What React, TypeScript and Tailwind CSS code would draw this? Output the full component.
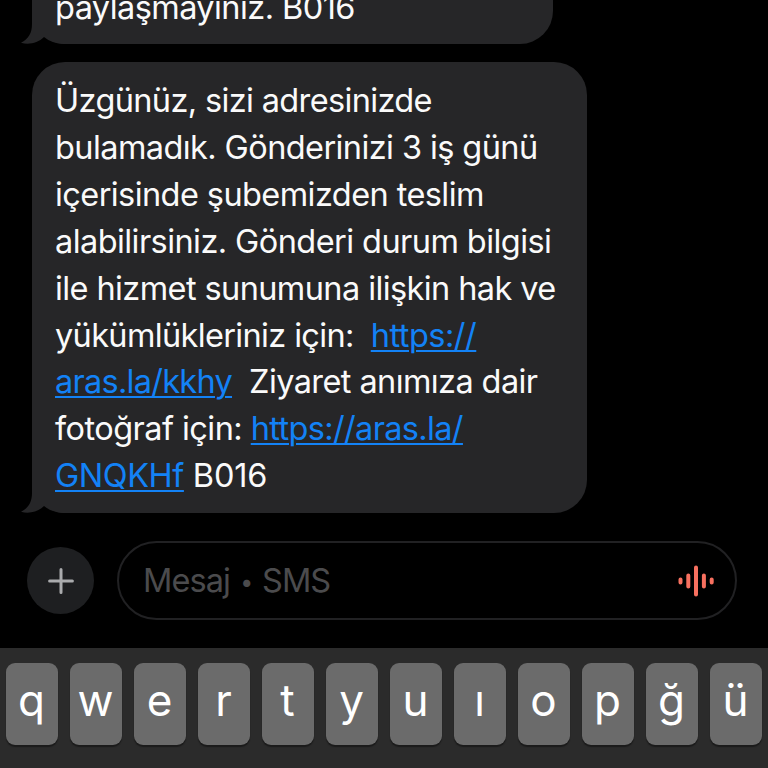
import React from 'react'
import clsx from 'clsx'

interface Segment {
  text: string
  link?: boolean
  className?: string
}

const LINES: Segment[][] = [
  [{ text: 'Üzgünüz, sizi adresinizde', className: 'tracking-[-0.64px]' }],
  [{ text: 'bulamadık. Gönderinizi 3 iş günü', className: 'tracking-[-0.59px]' }],
  [{ text: 'içerisinde şubemizden teslim', className: 'tracking-[-0.58px]' }],
  [{ text: 'alabilirsiniz. Gönderi durum bilgisi', className: 'tracking-[-0.57px]' }],
  [{ text: 'ile hizmet sunumuna ilişkin hak ve', className: 'tracking-[-0.6px]' }],
  [
    { text: 'yükümlükleriniz için:  ', className: 'tracking-[-0.65px]' },
    { text: 'https://', link: true, className: 'tracking-[-0.5px]' }
  ],
  [
    { text: 'aras.la/kkhy', link: true, className: 'tracking-[-0.73px]' },
    { text: '  Ziyaret anımıza dair', className: 'tracking-[-0.6px]' }
  ],
  [
    { text: 'fotoğraf için: ', className: 'tracking-[-0.55px]' },
    { text: 'https://aras.la/', link: true, className: 'tracking-[-0.65px]' }
  ],
  [
    { text: 'GNQKHf', link: true, className: 'tracking-[-0.45px]' },
    { text: ' B016', className: 'tracking-[-0.2px]' }
  ]
]

const KEYS = ['q', 'w', 'e', 'r', 't', 'y', 'u', 'ı', 'o', 'p', 'ğ', 'ü']

// Little hook on the bottom left corner of a received message
function BubbleTail() {
  return (
    <svg className="absolute -left-[11px] bottom-[-1px] h-[36px] w-[50px]" viewBox="0 0 50 36" fill="none">
      <path d="M0 36V0H11V14L23 28Q29 33 40 35V36Z" fill="#000" />
      <path d="M11 0V15C11 24 7.5 30 0 33.8C8 36 17 34 23 28L34 20V0Z" fill="#262628" />
      <path d="M23 28Q30 34 42 35L50 35V0H23Z" fill="#262628" />
    </svg>
  )
}

function Bubble({ children, className }: { children: React.ReactNode; className?: string }) {
  return (
    <div className={clsx('relative rounded-[33px] bg-[#262628] px-[23px] text-[32.5px] leading-[46.9px] text-[#fafafa]', className)}>
      <BubbleTail />
      {children}
    </div>
  )
}

function MessageLine({ segments }: { segments: Segment[] }) {
  return (
    <div className="relative whitespace-pre">
      {segments.map(({ text, link, className }) => (
        <span
          key={text}
          className={clsx(link && 'text-[#1382f6] underline decoration-2 underline-offset-[3px]', className)}
        >
          {text}
        </span>
      ))}
    </div>
  )
}

function Composer() {
  return (
    <div className="flex h-[79px] shrink-0 items-center gap-[23px] pl-[27px]">
      <button className="flex size-[67px] items-center justify-center rounded-full bg-[#1e1f21]">
        <svg className="size-[26px]" viewBox="0 0 26 26" stroke="#aaabad" strokeWidth="3" strokeLinecap="round">
          <path d="M13 1.6V24.4M1.6 13H24.4" />
        </svg>
      </button>
      <div className="flex h-[79px] w-[620px] items-center justify-between rounded-full border-2 border-[#212123] pr-[20px] pl-[24px]">
        <div className="flex items-center pt-[1px] text-[32.5px] text-[#4b4b4d]">
          <span className="tracking-[-0.9px]">Mesaj</span>
          <span className="w-[32px] pt-[3px] text-center text-[23px] tracking-[-1px] whitespace-pre"> • </span>
          <span className="tracking-[-1px]">SMS</span>
        </div>
        <svg className="h-[34px] w-[38px]" viewBox="0 0 38 34" stroke="#f7705f" strokeWidth="4" strokeLinecap="round">
          <path d="M3.5 15.5V18.5M11.3 11.5V22.5M19 3.5V30.5M26.9 11.5V22.5M34.7 15.5V18.5" />
        </svg>
      </div>
    </div>
  )
}

function Keyboard() {
  return (
    <div className="flex h-[120px] shrink-0 gap-[12px] bg-[#2b2b2b] px-[6px] pt-[15px]">
      {KEYS.map(key => (
        <button
          key={key}
          className="flex h-[82px] w-[52px] shrink-0 justify-center rounded-[9px] bg-[#6b6b6b] pt-[7px] pr-[1px] text-[44px] leading-[60px] font-normal text-white shadow-[0_2px_1px_#1b1b1b]"
        >
          {key}
        </button>
      ))}
    </div>
  )
}

export default function App() {
  return (
    <div className="flex h-[768px] w-[768px] flex-col overflow-hidden bg-black font-['Inter',sans-serif]">
      <div className="flex h-[541px] shrink-0 flex-col items-start gap-[18px] pl-[32px]">
        <Bubble className="-mt-[32px] h-[76px] w-[521px] pt-[17px]">
          <div className="relative tracking-[-0.57px]">paylaşmayınız. B016</div>
        </Bubble>
        <Bubble className="h-[451px] w-[555px] pt-[16px]">
          {LINES.map((segments, i) => (
            <MessageLine key={i} segments={segments} />
          ))}
        </Bubble>
      </div>
      <Composer />
      <div className="h-[28px] shrink-0" />
      <Keyboard />
    </div>
  )
}
